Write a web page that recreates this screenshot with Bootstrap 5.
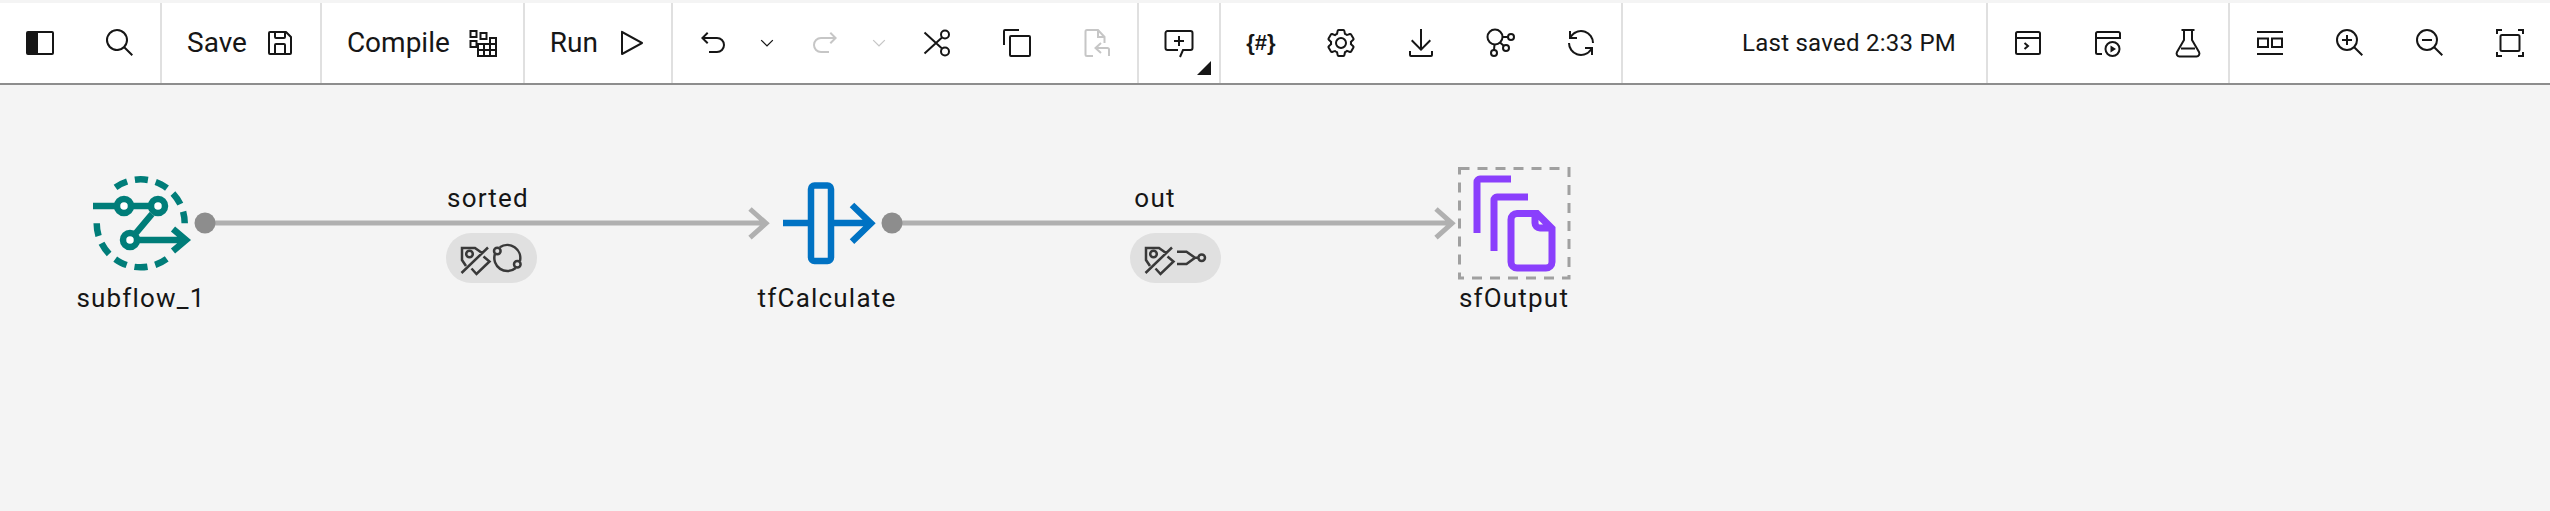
<!DOCTYPE html>
<html lang="en">
<head>
<meta charset="UTF-8">
<title>Flow designer</title>
<link rel="stylesheet" href="https://cdn.jsdelivr.net/npm/bootstrap@5.3.3/dist/css/bootstrap.min.css">
<script src="https://cdn.jsdelivr.net/npm/bootstrap@5.3.3/dist/js/bootstrap.bundle.min.js"></script>
<style>
html, body { height: 100%; }
body { background: #f4f4f4; font-family: Roboto, "Liberation Sans", sans-serif; color: #161616; overflow: hidden; }
.flow-bar { margin-top: 3px; height: 82px; background: #fff; border-bottom: 2px solid #8d8d8d; }
.bar-group { border-right: 2px solid #e0e0e0; height: 80px; }
.bar-group:last-child { border-right: 0; }
.tb-btn { width: 80px; height: 80px; padding: 0; border: 0; border-radius: 0; color: #161616; position: relative; }
.tb-split { width: 32px; height: 80px; padding: 0 4px 0 0; border: 0; border-radius: 0; color: #161616; }
.tb-text { height: 80px; padding: 0 24px 0 25px; gap: 17px; border: 0; border-radius: 0; font-size: 28px; color: #161616; line-height: 1; }
.tb-off { color: #c6c6c6; }
.ico { width: 32px; height: 32px; fill: currentColor; flex: none; }
.ico-line { fill: none; stroke: currentColor; stroke-width: 2; }
.ico-small { width: 20px; height: 20px; }
.hash-ico { font-family: "Liberation Sans", sans-serif; font-weight: 700; font-size: 22px; line-height: 1; }
.corner-tri { position: absolute; right: 8px; bottom: 8px; width: 14px; height: 14px; fill: #161616; }
.saved-text { font-size: 24px; letter-spacing: .25px; padding-right: 30px; }
.flow-canvas { height: 426px; position: relative; }
.flow-svg { position: absolute; left: 0; top: 0; width: 2550px; height: 426px; }
.flow-label { position: absolute; transform: translateX(-50%); font-size: 26px; letter-spacing: 1.2px; line-height: 32px; white-space: nowrap; }
.lbl-node { top: 197px; }
.lbl-edge { top: 97px; }
.lbl-subflow { left: 141px; }
.lbl-calc { left: 827px; }
.lbl-output { left: 1514px; }
.lbl-sorted { left: 488px; }
.lbl-out { left: 1155px; }
.wire { fill: none; stroke: #b0b0b0; stroke-width: 5; }
.port { fill: #8d8d8d; }
.pill { fill: #e0e0e0; }
.deco { fill: none; stroke: #393939; stroke-width: 2.5; }
.teal { fill: none; stroke: #007d79; stroke-width: 6.5; }
.teal-ring { fill: #fff; stroke: #007d79; stroke-width: 6.5; }
.blue { fill: none; stroke: #0072c3; stroke-width: 6.5; }
.purple { fill: none; stroke: #8a3ffc; stroke-width: 7; }
.sel-box { fill: none; stroke: #a0a0a0; stroke-width: 3; stroke-dasharray: 10 8; }
</style>
</head>
<body>
<div class="flow-bar d-flex">
    <div class="bar-group d-flex">
        <button class="btn tb-btn d-flex align-items-center justify-content-center" aria-label="Toggle panel">
            <svg class="ico" viewBox="0 0 32 32"><path d="M28 4H4a2 2 0 0 0-2 2v20a2 2 0 0 0 2 2h24a2 2 0 0 0 2-2V6a2 2 0 0 0-2-2ZM4 6h8v20H4Zm24 20H14V6h14Z"/><path d="M3 5h10v22H3z"/></svg>
        </button>
        <button class="btn tb-btn d-flex align-items-center justify-content-center" aria-label="Search">
            <svg class="ico" viewBox="0 0 32 32"><path d="M29,27.5859l-7.5521-7.5521a11.0177,11.0177,0,1,0-1.4141,1.4141L27.5859,29ZM4,13a9,9,0,1,1,9,9A9.01,9.01,0,0,1,4,13Z"/></svg>
        </button>
    </div>
    <div class="bar-group d-flex">
        <button class="btn tb-text d-flex align-items-center">Save
            <svg class="ico" viewBox="0 0 32 32"><path d="M27.71,9.29l-5-5A1,1,0,0,0,22,4H6A2,2,0,0,0,4,6V26a2,2,0,0,0,2,2H26a2,2,0,0,0,2-2V10A1,1,0,0,0,27.71,9.29ZM12,6h8v4H12Zm8,20H12V18h8Zm2,0V18a2,2,0,0,0-2-2H12a2,2,0,0,0-2,2v8H6V6h4v4a2,2,0,0,0,2,2h8a2,2,0,0,0,2-2V6.41l4,4V26Z"/></svg>
        </button>
    </div>
    <div class="bar-group d-flex">
        <button class="btn tb-text d-flex align-items-center">Compile
            <svg class="ico ico-line" viewBox="0 0 32 32"><rect x="3.5" y="4" width="6" height="6"/><rect x="13.5" y="6" width="6" height="6"/><rect x="3.5" y="14" width="6" height="6"/><rect x="23" y="11" width="6" height="6"/><path d="M11 23h18M11 17h18v12H11zM17 17v12M23 17v12"/></svg>
        </button>
    </div>
    <div class="bar-group d-flex">
        <button class="btn tb-text d-flex align-items-center">Run
            <svg class="ico" viewBox="0 0 32 32"><path d="M7,28a1,1,0,0,1-1-1V5a1,1,0,0,1,1.4819-.8763l20,11a1,1,0,0,1,0,1.7525l-20,11A1.0005,1.0005,0,0,1,7,28ZM8,6.6909V25.3088L24.9248,16Z"/></svg>
        </button>
    </div>
    <div class="bar-group d-flex">
        <button class="btn tb-btn d-flex align-items-center justify-content-center" aria-label="Undo">
            <svg class="ico" viewBox="0 0 32 32"><path d="M20,10H7.8149l3.5874-3.5859L10,5,4,11,10,17l1.4023-1.4146L7.8179,12H20a6,6,0,0,1,0,12H12v2h8a8,8,0,0,0,0-16Z"/></svg>
        </button>
        <button class="btn tb-split d-flex align-items-center justify-content-center" aria-label="Undo list">
            <svg class="ico ico-small" viewBox="0 0 32 32"><path d="M16 22L6 12 7.4 10.6 16 19.2 24.6 10.6 26 12z"/></svg>
        </button>
        <button class="btn tb-btn tb-off d-flex align-items-center justify-content-center" aria-label="Redo">
            <svg class="ico" viewBox="0 0 32 32"><path d="M12,10H24.1851L20.5977,6.4141,22,5l6,6-6,6-1.4023-1.4146L24.1821,12H12a6,6,0,0,0,0,12h8v2H12a8,8,0,0,1,0-16Z"/></svg>
        </button>
        <button class="btn tb-split tb-off d-flex align-items-center justify-content-center" aria-label="Redo list">
            <svg class="ico ico-small" viewBox="0 0 32 32"><path d="M16 22L6 12 7.4 10.6 16 19.2 24.6 10.6 26 12z"/></svg>
        </button>
        <button class="btn tb-btn d-flex align-items-center justify-content-center" aria-label="Cut">
            <svg class="ico ico-line" viewBox="0 0 32 32"><circle cx="24" cy="7.500" r="4"/><circle cx="24" cy="24.500" r="4"/><path d="M3.500 5.500l17.500 16M3.500 26.500l17.500-16"/></svg>
        </button>
        <button class="btn tb-btn d-flex align-items-center justify-content-center" aria-label="Copy">
            <svg class="ico" viewBox="0 0 32 32"><path d="M28,10V28H10V10H28m0-2H10a2,2,0,0,0-2,2V28a2,2,0,0,0,2,2H28a2,2,0,0,0,2-2V10a2,2,0,0,0-2-2Z"/><path d="M4,18H2V4A2,2,0,0,1,4,2H18V4H4Z"/></svg>
        </button>
        <button class="btn tb-btn tb-off d-flex align-items-center justify-content-center" aria-label="Paste">
            <svg class="ico ico-line" viewBox="0 0 32 32"><path d="M12 29H6a1.500 1.500 0 0 1-1.500-1.500V4.500A1.500 1.500 0 0 1 6 3h11l6.500 7v6M17 3v7h6.500M28 29v-6.500a1.500 1.500 0 0 0-1.500-1.500H14M20 16l-5.500 5 5.500 5"/></svg>
        </button>
    </div>
    <div class="bar-group d-flex">
        <button class="btn tb-btn d-flex align-items-center justify-content-center" aria-label="Add comment">
            <svg class="ico ico-line" viewBox="0 0 32 32"><path d="M17 30l3-7h7.500a2 2 0 0 0 2-2V6a2 2 0 0 0-2-2h-23a2 2 0 0 0-2 2v15a2 2 0 0 0 2 2H15M16 9v10M11 14h10"/></svg>
            <svg class="corner-tri" viewBox="0 0 14 14"><polygon points="14,0 14,14 0,14"/></svg>
        </button>
    </div>
    <div class="bar-group d-flex">
        <button class="btn tb-btn d-flex align-items-center justify-content-center" aria-label="Parameters"><span class="hash-ico">{#}</span></button>
        <button class="btn tb-btn d-flex align-items-center justify-content-center" aria-label="Settings">
            <svg class="ico" viewBox="0 0 32 32"><path d="M27,16.76c0-.25,0-.5,0-.76s0-.51,0-.77l1.92-1.68A2,2,0,0,0,29.3,11L26.94,7a2,2,0,0,0-1.73-1,2,2,0,0,0-.64.1l-2.43.82a11.35,11.35,0,0,0-1.31-.75l-.51-2.52a2,2,0,0,0-2-1.61H13.64a2,2,0,0,0-2,1.61l-.51,2.52a11.48,11.48,0,0,0-1.32.75L7.43,6.06A2,2,0,0,0,6.79,6,2,2,0,0,0,5.06,7L2.7,11a2,2,0,0,0,.41,2.51L5,15.24c0,.25,0,.5,0,.76s0,.51,0,.77L3.11,18.45A2,2,0,0,0,2.7,21L5.06,25a2,2,0,0,0,1.73,1,2,2,0,0,0,.64-.1l2.43-.82a11.35,11.35,0,0,0,1.31.75l.51,2.52a2,2,0,0,0,2,1.61h4.72a2,2,0,0,0,2-1.61l.51-2.52a11.48,11.48,0,0,0,1.32-.75l2.42.82a2,2,0,0,0,.64.1,2,2,0,0,0,1.73-1L29.3,21a2,2,0,0,0-.41-2.51ZM25.21,24l-3.43-1.16a8.86,8.86,0,0,1-2.71,1.57L18.36,28H13.64l-.71-3.55a9.36,9.36,0,0,1-2.7-1.57L6.79,24,4.43,20l2.72-2.4a8.9,8.9,0,0,1,0-3.13L4.43,12,6.79,8l3.43,1.16a8.86,8.86,0,0,1,2.71-1.57L13.64,4h4.72l.71,3.55a9.36,9.36,0,0,1,2.7,1.57L25.21,8,27.57,12l-2.72,2.4a8.9,8.9,0,0,1,0,3.13L27.57,20Z"/><path d="M16,22a6,6,0,1,1,6-6A5.94,5.94,0,0,1,16,22Zm0-10a3.91,3.91,0,0,0-4,4,3.91,3.91,0,0,0,4,4,3.91,3.91,0,0,0,4-4A3.91,3.91,0,0,0,16,12Z"/></svg>
        </button>
        <button class="btn tb-btn d-flex align-items-center justify-content-center" aria-label="Download">
            <svg class="ico" viewBox="0 0 32 32"><path d="M26 24v4H6v-4H4v4a2 2 0 0 0 2 2h20a2 2 0 0 0 2-2v-4z"/><path d="M26 14l-1.41-1.41L17 20.170V2h-2v18.170l-7.590-7.580L6 14l10 10 10-10z"/></svg>
        </button>
        <button class="btn tb-btn d-flex align-items-center justify-content-center" aria-label="Lineage">
            <svg class="ico ico-line" viewBox="0 0 32 32"><circle cx="10" cy="10" r="7.500"/><circle cx="26" cy="10" r="3"/><circle cx="9" cy="26" r="3"/><circle cx="21" cy="21" r="3"/><path d="M17.500 10H23M9.500 17.500L9 23M15 15.500l4 3.500"/></svg>
        </button>
        <button class="btn tb-btn d-flex align-items-center justify-content-center" aria-label="Refresh">
            <svg class="ico" viewBox="0 0 32 32"><path d="M12 10H6.780A11 11 0 0 1 27 16h2A13 13 0 0 0 6 7.680V4H4v8h8zM20 22h5.220A11 11 0 0 1 5 16H3a13 13 0 0 0 23 8.320V28h2v-8h-8z"/></svg>
        </button>
    </div>
    <div class="bar-group flex-grow-1 d-flex align-items-center justify-content-end">
        <span class="saved-text">Last saved 2:33 PM</span>
    </div>
    <div class="bar-group d-flex">
        <button class="btn tb-btn d-flex align-items-center justify-content-center" aria-label="Logs">
            <svg class="ico ico-line" viewBox="0 0 32 32"><rect x="4" y="5" width="24" height="22" rx="1.500"/><path d="M4 11h24M12.500 16l3.500 3-3.500 3"/></svg>
        </button>
        <button class="btn tb-btn d-flex align-items-center justify-content-center" aria-label="Job runs">
            <svg class="ico ico-line" viewBox="0 0 32 32"><path d="M10 27H5.500A1.500 1.500 0 0 1 4 25.500v-19A1.500 1.500 0 0 1 5.500 5h21A1.500 1.500 0 0 1 28 6.500V12M4 11h24"/><circle cx="20.500" cy="22" r="7"/><path fill="currentColor" stroke="none" d="M18.500 18.500l5.500 3.500-5.500 3.500z"/></svg>
        </button>
        <button class="btn tb-btn d-flex align-items-center justify-content-center" aria-label="Test">
            <svg class="ico ico-line" viewBox="0 0 32 32"><path d="M9.500 3h13M12 3v10L5 25a3 3 0 0 0 2.500 4.500h17A3 3 0 0 0 27 25l-7-12V3M9 21.500h14"/></svg>
        </button>
    </div>
    <div class="bar-group d-flex">
        <button class="btn tb-btn d-flex align-items-center justify-content-center" aria-label="Arrange">
            <svg class="ico ico-line" viewBox="0 0 32 32"><path d="M3 5h26M3 27h26"/><rect x="4" y="11.500" width="10" height="8.500"/><rect x="18" y="11.500" width="10" height="8.500"/></svg>
        </button>
        <button class="btn tb-btn d-flex align-items-center justify-content-center" aria-label="Zoom in">
            <svg class="ico" viewBox="0 0 32 32"><path d="M18 12L14 12 14 8 12 8 12 12 8 12 8 14 12 14 12 18 14 18 14 14 18 14 18 12z"/><path d="M21.4479,20A10.856,10.856,0,0,0,24,13,11,11,0,1,0,13,24a10.856,10.856,0,0,0,7-2.5521L27.5859,29,29,27.5859ZM13,22a9,9,0,1,1,9-9A9.01,9.01,0,0,1,13,22Z"/></svg>
        </button>
        <button class="btn tb-btn d-flex align-items-center justify-content-center" aria-label="Zoom out">
            <svg class="ico" viewBox="0 0 32 32"><path d="M8 12H18V14H8z"/><path d="M21.4479,20A10.856,10.856,0,0,0,24,13,11,11,0,1,0,13,24a10.856,10.856,0,0,0,7-2.5521L27.5859,29,29,27.5859ZM13,22a9,9,0,1,1,9-9A9.01,9.01,0,0,1,13,22Z"/></svg>
        </button>
        <button class="btn tb-btn d-flex align-items-center justify-content-center" aria-label="Fit to screen">
            <svg class="ico ico-line" viewBox="0 0 32 32"><rect x="6.500" y="8" width="19" height="16" rx="1.500"/><path d="M3 7V3h5M24 3h5v4M29 25v4h-5M8 29H3v-4"/></svg>
        </button>
    </div>
</div>

<div class="flow-canvas">
    <svg class="flow-svg" viewBox="0 85 2550 426">
        <!-- wires -->
        <path class="wire" d="M205 223H765M750 209l16 14.300-16 14.300"/>
        <path class="wire" d="M892 223H1451M1436 209l16 14.300-16 14.300"/>
        <circle class="port" cx="205" cy="223" r="10.500"/>
        <circle class="port" cx="892" cy="223" r="10.500"/>

        <!-- subflow_1 -->
        <path class="teal" stroke-dasharray="13 7.950" d="M166.700 258.800A44 44 0 0 1 96.700 223.300"/>
        <path class="teal" stroke-dasharray="13 7.950" d="M115.500 187.300A44 44 0 0 1 184.700 223.300"/>
        <path class="teal" d="M93 206H151M152 214L136 233M138 240H183M173 229l13 11-13 11"/>
        <circle class="teal-ring" cx="124" cy="206" r="7"/>
        <circle class="teal-ring" cx="158" cy="206" r="7"/>
        <circle class="teal-ring" cx="130" cy="240" r="7"/>

        <!-- tfCalculate -->
        <rect class="blue" x="811" y="185.500" width="20" height="75.500" rx="3.500"/>
        <path class="blue" d="M783 223H808M834 223H871M852 205l19 18.300-19 18.300"/>

        <!-- sfOutput -->
        <rect class="sel-box" x="1459.500" y="168.500" width="109.500" height="109.500"/>
        <path class="purple" d="M1477 233V182a3 3 0 0 1 3-3H1511M1494 251V200a3 3 0 0 1 3-3H1528"/>
        <path class="purple" d="M1537 213.500H1517a6 6 0 0 0-6 6V262a6 6 0 0 0 6 6H1546a6 6 0 0 0 6-6V228.500ZM1535 214v9a5 5 0 0 0 5 5H1552"/>

        <!-- sorted decoration -->
        <rect class="pill" x="446" y="233" width="91" height="50" rx="25"/>
        <g class="deco">
            <path d="M488 247.500L461.500 273M466 266L462 260V248H475L482 253M471.500 268.500L476.500 274L489.500 261.500L483.500 256.500"/>
            <circle cx="469.500" cy="254" r="3.300"/>
            <circle cx="497.300" cy="251" r="3.300"/>
            <circle cx="517.300" cy="264.300" r="3.300"/>
            <path d="M499.800 247.350A13 13 0 0 1 519.900 261.100M515.700 268A13 13 0 0 1 494.900 254.200"/>
        </g>

        <!-- out decoration -->
        <rect class="pill" x="1130" y="233" width="91" height="50" rx="25"/>
        <g class="deco">
            <path d="M1172 247.500L1145.500 273M1150 266L1146 260V248H1159L1166 253M1155.500 268.500L1160.500 274L1173.500 261.500L1167.500 256.500"/>
            <circle cx="1153.500" cy="254" r="3.300"/>
            <circle cx="1201.700" cy="257.700" r="3.300"/>
            <path d="M1177 251.700H1186.500L1195 257.700L1186.500 264H1177M1195 257.700H1198.400"/>
        </g>
    </svg>
    <div class="flow-label lbl-edge lbl-sorted">sorted</div>
    <div class="flow-label lbl-edge lbl-out">out</div>
    <div class="flow-label lbl-node lbl-subflow">subflow_1</div>
    <div class="flow-label lbl-node lbl-calc">tfCalculate</div>
    <div class="flow-label lbl-node lbl-output">sfOutput</div>
</div>
</body>
</html>
